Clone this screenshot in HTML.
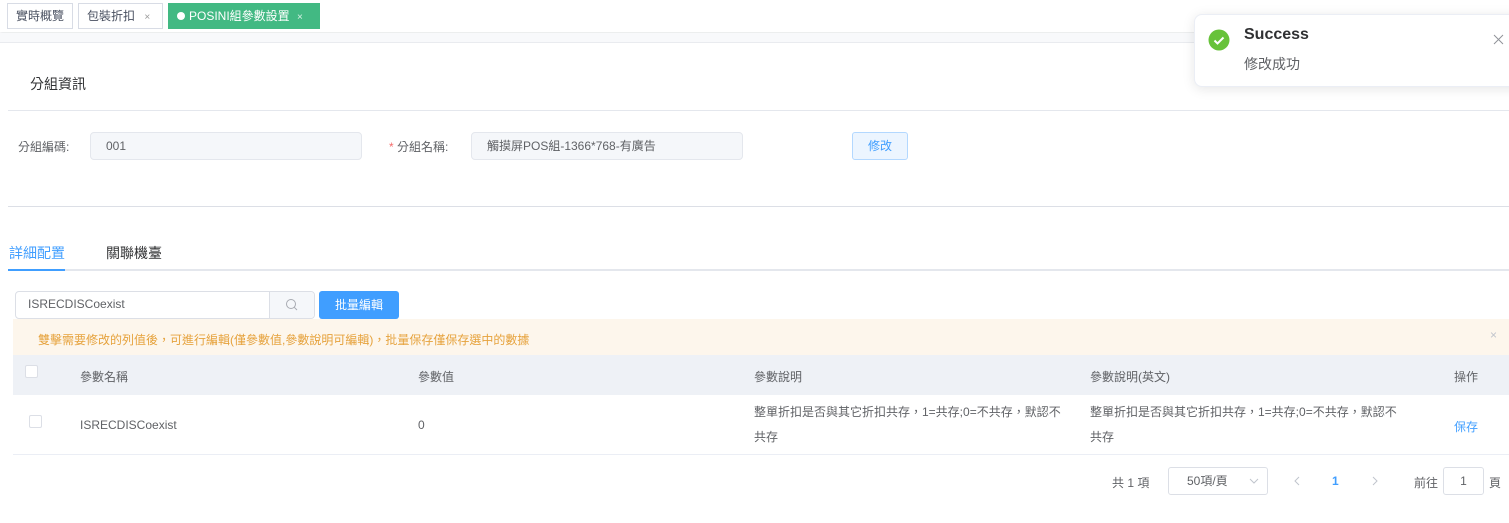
<!DOCTYPE html>
<html><head><meta charset="utf-8"><style>
*{box-sizing:border-box;margin:0;padding:0}
body{width:1509px;height:523px;background:#fff;font-family:"Liberation Sans","Noto Sans CJK TC",sans-serif;font-size:12px;color:#606266;position:relative;overflow:hidden}
.a{position:absolute}
.tag{position:absolute;top:3px;height:26px;border:1px solid #d8dce5;line-height:24px;padding:0 8px;color:#495060;font-size:12px;background:#fff}
.inp{position:absolute;height:28px;background:#f5f7fa;border:1px solid #e4e7ed;border-radius:4px;line-height:26px;padding-left:15px;color:#606266}
.cb{position:absolute;width:13px;height:13px;border:1px solid #dcdfe6;border-radius:2px;background:#fff}
</style></head><body>
<div class="a" style="left:0;top:0;width:1509px;height:32px;background:#fff;box-shadow:0 1px 3px rgba(0,21,41,.12)"></div>
<div class="a" style="left:0;top:33px;width:1509px;height:10px;background:#f8f9fb;border-bottom:1px solid #e9ebef"></div>
<div class="tag" style="left:7px">實時概覽</div>
<div class="tag" style="left:78px;width:85px">包裝折扣 <span style="font-size:10px;color:#999;margin-left:6px">×</span></div>
<div class="tag" style="left:168px;width:152px;background:#42b983;border-color:#42b983;color:#fff"><span style="display:inline-block;width:8px;height:8px;border-radius:50%;background:#fff;margin-right:4px"></span>POSINI組參數設置 <span style="font-size:10px;margin-left:4px;opacity:.8">×</span></div>

<div class="a" style="left:30px;top:74px;font-size:14px;color:#303133">分組資訊</div>
<div class="a" style="left:8px;top:110px;width:1501px;height:1px;background:#e4e7ed"></div>
<div class="a" style="left:18px;top:138px;color:#606266">分組編碼:</div>
<div class="inp" style="left:90px;top:132px;width:272px">001</div>
<div class="a" style="left:389px;top:138px;color:#606266"><span style="color:#f56c6c">*</span> 分組名稱:</div>
<div class="inp" style="left:471px;top:132px;width:272px">觸摸屏POS組-1366*768-有廣告</div>
<div class="a" style="left:852px;top:132px;width:56px;height:28px;background:#ecf5ff;border:1px solid #b3d8ff;border-radius:3px;color:#409eff;text-align:center;line-height:26px">修改</div>
<div class="a" style="left:8px;top:206px;width:1501px;height:1px;background:#dcdfe6"></div>

<div class="a" style="left:9px;top:243px;font-size:14px;color:#409eff">詳細配置</div>
<div class="a" style="left:106px;top:243px;font-size:14px;color:#303133">關聯機臺</div>
<div class="a" style="left:8px;top:269px;width:1501px;height:2px;background:#e4e7ed"></div>
<div class="a" style="left:8px;top:269px;width:57px;height:2px;background:#409eff"></div>

<div class="a" style="left:15px;top:291px;width:300px;height:28px;border:1px solid #dcdfe6;border-radius:4px;background:#fff"></div>
<div class="a" style="left:269px;top:292px;width:45px;height:26px;background:#f5f7fa;border-left:1px solid #dcdfe6;border-radius:0 4px 4px 0"></div>
<svg class="a" style="left:285px;top:298px" width="13" height="13" viewBox="0 0 13 13"><circle cx="6" cy="6" r="4.5" fill="none" stroke="#a8abb2" stroke-width="1"/><path d="M9.3 9.3L12 12" stroke="#a8abb2"/></svg>
<div class="a" style="left:28px;top:297px;color:#606266">ISRECDISCoexist</div>
<div class="a" style="left:319px;top:291px;width:80px;height:28px;background:#409eff;border-radius:3px;color:#fff;text-align:center;line-height:28px">批量編輯</div>

<div class="a" style="left:13px;top:319px;width:1496px;height:36px;background:#fdf6ec"></div>
<div class="a" style="left:38px;top:331px;color:#e6a23c">雙擊需要修改的列值後，可進行編輯(僅參數值,參數說明可編輯)，批量保存僅保存選中的數據</div>
<div class="a" style="left:1490px;top:328px;color:#c0c4cc;font-size:12px">×</div>

<div class="a" style="left:13px;top:355px;width:1496px;height:40px;background:#eef1f6"></div>
<div class="cb" style="left:25px;top:365px"></div>
<div class="a" style="left:80px;top:368px">參數名稱</div>
<div class="a" style="left:418px;top:368px">參數值</div>
<div class="a" style="left:754px;top:368px">參數說明</div>
<div class="a" style="left:1090px;top:368px">參數說明(英文)</div>
<div class="a" style="left:1454px;top:368px">操作</div>

<div class="cb" style="left:29px;top:415px"></div>
<div class="a" style="left:80px;top:418px">ISRECDISCoexist</div>
<div class="a" style="left:418px;top:418px">0</div>
<div class="a" style="left:754px;top:400px;width:312px;line-height:25px">整單折扣是否與其它折扣共存，1=共存;0=不共存，默認不共存</div>
<div class="a" style="left:1090px;top:400px;width:312px;line-height:25px">整單折扣是否與其它折扣共存，1=共存;0=不共存，默認不共存</div>
<div class="a" style="left:1454px;top:418px;color:#409eff">保存</div>
<div class="a" style="left:13px;top:454px;width:1496px;height:1px;background:#ebeef5"></div>

<div class="a" style="left:1112px;top:474px;color:#606266">共 1 項</div>
<div class="a" style="left:1168px;top:467px;width:100px;height:28px;border:1px solid #dcdfe6;border-radius:3px;padding-left:18px;line-height:26px">50項/頁</div>
<svg class="a" style="left:1249px;top:478px" width="10" height="6" viewBox="0 0 10 6"><path d="M1 1l4 4 4-4" fill="none" stroke="#c0c4cc"/></svg>
<svg class="a" style="left:1294px;top:476px" width="6" height="10" viewBox="0 0 6 10"><path d="M5 1L1 5l4 4" fill="none" stroke="#c0c4cc"/></svg>
<div class="a" style="left:1332px;top:474px;color:#409eff;font-weight:bold">1</div>
<svg class="a" style="left:1372px;top:476px" width="6" height="10" viewBox="0 0 6 10"><path d="M1 1l4 4-4 4" fill="none" stroke="#c0c4cc"/></svg>
<div class="a" style="left:1414px;top:474px">前往</div>
<div class="a" style="left:1443px;top:467px;width:41px;height:28px;border:1px solid #dcdfe6;border-radius:3px;text-align:center;line-height:26px">1</div>
<div class="a" style="left:1489px;top:474px">頁</div>

<div class="a" style="left:1194px;top:14px;width:330px;height:73px;background:#fff;border:1px solid #ebeef5;border-radius:8px;box-shadow:0 2px 12px rgba(0,0,0,.1)"></div>
<svg class="a" style="left:1208px;top:29px" width="22" height="22" viewBox="0 0 22 22"><circle cx="11" cy="11" r="10.5" fill="#67c23a"/><path d="M6.5 11.5l3 3 6-6" fill="none" stroke="#fff" stroke-width="2"/></svg>
<div class="a" style="left:1244px;top:26px;font-size:16px;font-weight:bold;color:#303133">Success</div>
<div class="a" style="left:1244px;top:54px;font-size:14px;color:#606266">修改成功</div>
<svg class="a" style="left:1493px;top:34px" width="11" height="11" viewBox="0 0 11 11"><path d="M1 1L10 10M10 1L1 10" stroke="#909399" stroke-width="1"/></svg>
</body></html>
